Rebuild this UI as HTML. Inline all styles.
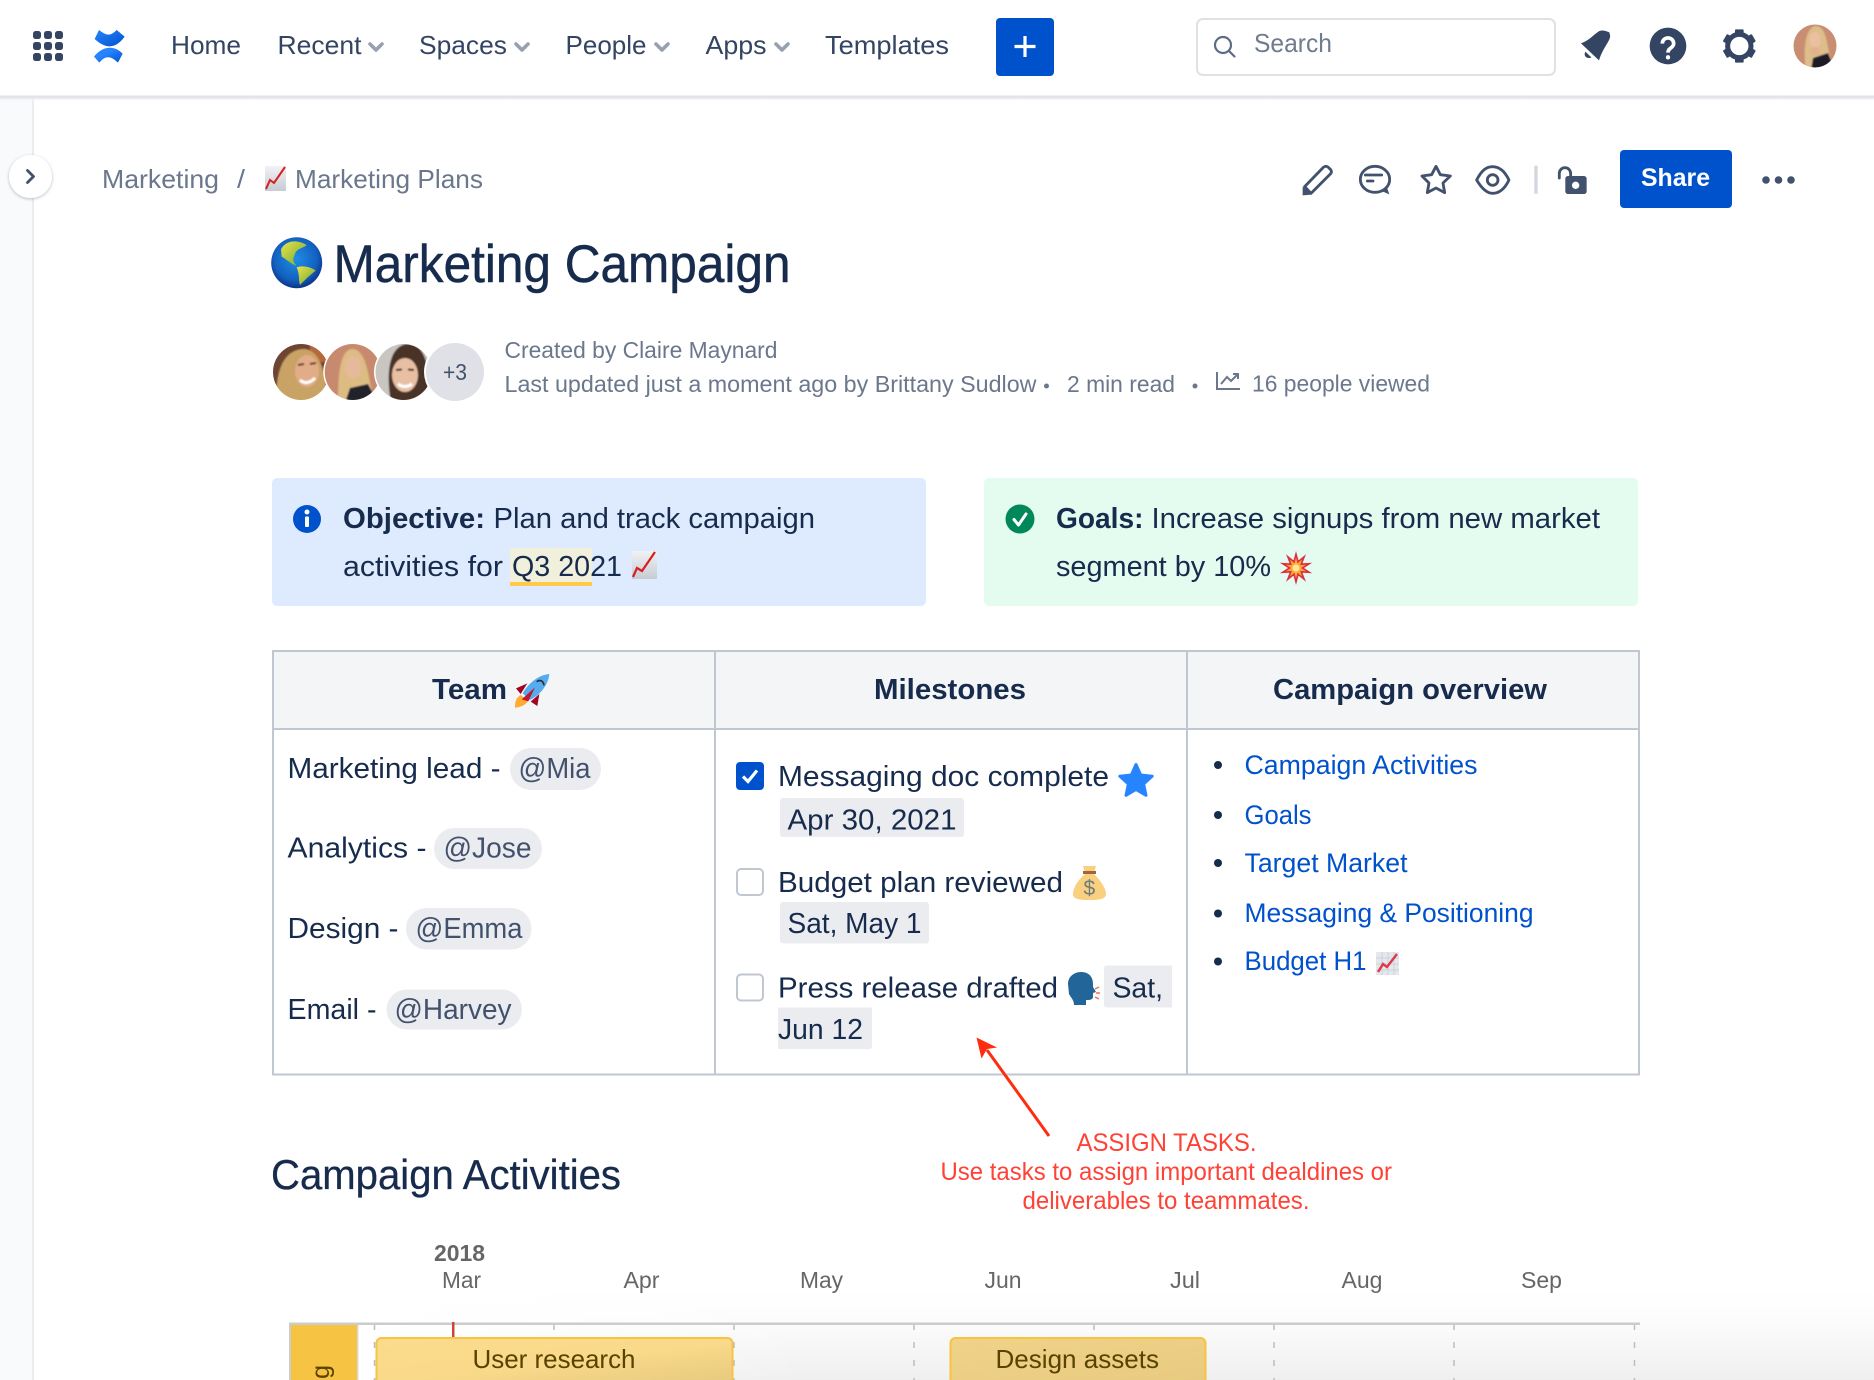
<!DOCTYPE html>
<html lang="en">
<head>
<meta charset="utf-8">
<title>Marketing Campaign</title>
<style>
html,body{margin:0;padding:0;background:#fff;width:1874px;height:1380px;overflow:hidden}
svg{display:block}
text{font-family:"Liberation Sans",Arial,sans-serif}
.nav{font-size:26px;fill:#344563}
.crumb{font-size:26px;fill:#6B778C}
.meta{font-size:23px;fill:#6B778C}
.body{font-size:29px;fill:#172B4D}
.bold{font-size:29px;fill:#172B4D;font-weight:700}
.ment{font-size:29px;fill:#42526E}
.link{font-size:26.5px;fill:#0052CC}
.note{font-size:25px;fill:#FF4136}
.axis{font-size:23px;fill:#666}
.bar{font-size:26px;fill:#594300}
.pill{fill:#EBECF0}
.ic{fill:none;stroke:#42526E;stroke-width:8.5;stroke-linecap:round;stroke-linejoin:round}
.chev{fill:none;stroke:#97A0AF;stroke-width:3.6;stroke-linecap:round;stroke-linejoin:round}
</style>
</head>
<body>
<svg width="1874" height="1380" viewBox="0 0 1874 1380" xmlns="http://www.w3.org/2000/svg">
<defs>
<linearGradient id="logo" x1="0" y1="0" x2="1" y2="1"><stop offset="0" stop-color="#2684FF"/><stop offset="1" stop-color="#0052CC"/></linearGradient>
<linearGradient id="logo2" x1="1" y1="1" x2="0" y2="0"><stop offset="0" stop-color="#0052CC"/><stop offset=".6" stop-color="#2684FF"/></linearGradient>
<linearGradient id="navsh" x1="0" y1="0" x2="0" y2="1"><stop offset="0" stop-color="#DFE1E6"/><stop offset=".4" stop-color="#E4E6EA"/><stop offset="1" stop-color="#fff" stop-opacity="0"/></linearGradient>
<linearGradient id="box" x1="0" y1="0" x2="0" y2="1"><stop offset="0" stop-color="#F1F2F4"/><stop offset="1" stop-color="#C6CCD4"/></linearGradient>
<radialGradient id="sea" cx=".48" cy=".42" r=".6"><stop offset="0" stop-color="#1E8FE6"/><stop offset=".7" stop-color="#1360C0"/><stop offset="1" stop-color="#0A2E80"/></radialGradient>
<linearGradient id="land" x1="0" y1="0" x2="1" y2="1"><stop offset="0" stop-color="#E8E44E"/><stop offset="1" stop-color="#6EA52E"/></linearGradient>
<linearGradient id="fade" x1="0" y1="0" x2="0" y2="1"><stop offset="0" stop-color="#fff"/><stop offset=".35" stop-color="#FCFCFC"/><stop offset="1" stop-color="#EFEFEF"/></linearGradient>
<linearGradient id="fadeX" x1="0" y1="0" x2="1" y2="0"><stop offset="0" stop-color="#fff"/><stop offset="1" stop-color="#fff" stop-opacity="0"/></linearGradient>
<linearGradient id="barA" x1="0" y1="0" x2="1" y2="1"><stop offset="0" stop-color="#FBDC8C"/><stop offset=".55" stop-color="#F9D98A"/><stop offset="1" stop-color="#E8CB80"/></linearGradient>
<linearGradient id="barB" x1="0" y1="0" x2="1" y2="1"><stop offset="0" stop-color="#F0D388"/><stop offset="1" stop-color="#E8CB80"/></linearGradient>
<filter id="sh" x="-30%" y="-30%" width="160%" height="160%"><feDropShadow dx="0" dy="1" stdDeviation="1.5" flood-color="#091E42" flood-opacity=".28"/></filter>
<filter id="soft" x="-5%" y="-5%" width="110%" height="110%"><feGaussianBlur stdDeviation=".9"/></filter>
<clipPath id="c1"><circle cx="301" cy="372" r="28"/></clipPath>
<clipPath id="c2"><circle cx="352.7" cy="372" r="28"/></clipPath>
<clipPath id="c3"><circle cx="403.5" cy="372" r="28"/></clipPath>
<clipPath id="c4"><circle cx="1815" cy="46" r="21.5"/></clipPath>
</defs>

<!-- sidebar -->
<rect x="0" y="97" width="32" height="1283" fill="#F9FAFC"/>
<rect x="32" y="97" width="2" height="1283" fill="#EBECF0"/>

<!-- nav -->
<rect x="0" y="95.500" width="1874" height="6" fill="url(#navsh)"/>
<g fill="#344563">
<rect x="33" y="31" width="8" height="8" rx="2.600"/><rect x="44" y="31" width="8" height="8" rx="2.600"/><rect x="55" y="31" width="8" height="8" rx="2.600"/>
<rect x="33" y="42" width="8" height="8" rx="2.600"/><rect x="44" y="42" width="8" height="8" rx="2.600"/><rect x="55" y="42" width="8" height="8" rx="2.600"/>
<rect x="33" y="53" width="8" height="8" rx="2.600"/><rect x="44" y="53" width="8" height="8" rx="2.600"/><rect x="55" y="53" width="8" height="8" rx="2.600"/>
</g>
<g transform="translate(20,15) scale(.3333)">
<path d="M237 45C255 58 268 68 290 45L314 65C285 105 255 100 224 72Z" fill="url(#logo)"/>
<path d="M222 125C250 90 285 92 308 116L294 143C275 125 258 118 238 143Z" fill="url(#logo2)"/>
</g>
<text class="nav" x="171" y="54" textLength="70" lengthAdjust="spacingAndGlyphs">Home</text>
<text class="nav" x="277.500" y="54" textLength="84" lengthAdjust="spacingAndGlyphs">Recent</text>
<path class="chev" d="M370 44l6 6 6-6"/>
<text class="nav" x="419" y="54" textLength="88" lengthAdjust="spacingAndGlyphs">Spaces</text>
<path class="chev" d="M516 44l6 6 6-6"/>
<text class="nav" x="565.500" y="54" textLength="81" lengthAdjust="spacingAndGlyphs">People</text>
<path class="chev" d="M656 44l6 6 6-6"/>
<text class="nav" x="705.500" y="54" textLength="61" lengthAdjust="spacingAndGlyphs">Apps</text>
<path class="chev" d="M776 44l6 6 6-6"/>
<text class="nav" x="825" y="54" textLength="124" lengthAdjust="spacingAndGlyphs">Templates</text>
<rect x="996" y="18" width="58" height="58" rx="4" fill="#0052CC"/>
<path d="M1025 36v21M1014.500 46.500h21" stroke="#fff" stroke-width="3.200" fill="none"/>

<rect x="1197" y="19" width="358" height="56" rx="6" fill="#fff" stroke="#DFE1E6" stroke-width="2"/>
<circle cx="1223" cy="45" r="8" fill="none" stroke="#5E6C84" stroke-width="2.200"/>
<path d="M1229 51l5.500 5.500" stroke="#5E6C84" stroke-width="2.200" stroke-linecap="round"/>
<text x="1254" y="52" font-size="26" fill="#707B8C" textLength="78" lengthAdjust="spacingAndGlyphs">Search</text>

<g transform="translate(1570,15) scale(.3333)" fill="#344563">
<path d="M33 85C60 75 75 55 88 48C100 44 112 50 118 52L120 60C124 75 100 95 87 136Z"/>
<path d="M46 110L64 127C55 133 38 126 46 110Z"/>
<circle cx="294" cy="93" r="55"/>
<path d="M277 86C277 63 311 63 311 86C311 100 294 97 294 113" fill="none" stroke="#fff" stroke-width="11"/>
<circle cx="294" cy="127" r="6.500" fill="#fff"/>
<circle cx="508" cy="93" r="35" fill="none" stroke="#344563" stroke-width="15"/>
<rect x="495" y="43" width="26" height="16" rx="3"/>
<rect x="495" y="127" width="26" height="16" rx="3"/>
<rect x="495" y="43" width="26" height="16" rx="3" transform="rotate(60 508 93)"/>
<rect x="495" y="43" width="26" height="16" rx="3" transform="rotate(120 508 93)"/>
<rect x="495" y="43" width="26" height="16" rx="3" transform="rotate(240 508 93)"/>
<rect x="495" y="43" width="26" height="16" rx="3" transform="rotate(300 508 93)"/>
</g>

<!-- nav avatar -->
<g clip-path="url(#c4)">
<g filter="url(#soft)">
<rect x="1792" y="23" width="46" height="46" fill="#C98E72"/>
<path d="M1806 70C1803 50 1805 27 1816 26C1828 27 1826 48 1832 62L1826 70Z" fill="#DDBE8A"/>
<ellipse cx="1815" cy="40" rx="5.500" ry="8" fill="#EBC0A2"/>
<path d="M1812 47h6l2 8-9 0Z" fill="#E3B090"/>
<path d="M1811 70L1813 58L1828 53L1835 70Z" fill="#1E1E28"/>
</g>
</g>

<!-- collapse -->
<circle cx="30.500" cy="176.500" r="21.500" fill="#fff" filter="url(#sh)"/>
<path d="M27.500 170.500l6 6-6 6" fill="none" stroke="#42526E" stroke-width="2.800" stroke-linecap="round" stroke-linejoin="round"/>

<!-- breadcrumb -->
<text class="crumb" x="102" y="188" textLength="117" lengthAdjust="spacingAndGlyphs">Marketing</text>
<text class="crumb" x="237" y="188" textLength="8" lengthAdjust="spacingAndGlyphs">/</text>
<g transform="translate(265,166)">
<rect width="21" height="25" fill="url(#box)"/>
<path d="M1 23L5 14L9 17L20 1" fill="none" stroke="#D81E1E" stroke-width="2"/>
</g>
<text class="crumb" x="295" y="188" textLength="188" lengthAdjust="spacingAndGlyphs">Marketing Plans</text>

<!-- action icons -->
<g transform="translate(1290,150) scale(.3333)">
<path class="ic" d="M44 110L100 52Q108 46 115 52L122 59Q127 66 121 72L63 130Z"/>
<path d="M38 110L38 136L64 134Z" fill="#42526E"/>
<ellipse class="ic" cx="255" cy="88" rx="44" ry="39"/>
<path d="M272 122L298 133L290 110Z" fill="#42526E"/>
<path class="ic" d="M226 75H275M232 93H249"/>
<path class="ic" d="M438 49L451 74L481 78L459 99L464 128L438 114L412 128L417 99L396 78L425 74Z"/>
<path class="ic" d="M560 90C575 60 590 50 608 50C630 50 645 65 657 90C645 115 630 130 608 130C590 130 575 115 560 90Z"/>
<circle class="ic" cx="608" cy="90" r="16"/>
<rect x="733" y="47" width="10" height="84" fill="#D3D7DF"/>
<path class="ic" d="M808 84V70A17 17 0 0 1 842 70V80"/>
<rect x="826" y="78" width="64" height="54" rx="8" fill="#42526E"/>
<circle cx="857" cy="106" r="11" fill="#fff"/>
</g>
<rect x="1620" y="150" width="112" height="58" rx="4" fill="#0052CC"/>
<text x="1641" y="186" font-size="25" font-weight="700" fill="#fff" textLength="69" lengthAdjust="spacingAndGlyphs">Share</text>
<g fill="#42526E"><circle cx="1766" cy="180" r="3.800"/><circle cx="1778.500" cy="180" r="3.800"/><circle cx="1791" cy="180" r="3.800"/></g>

<!-- globe + title -->
<circle cx="296.700" cy="262.700" r="25.500" fill="url(#sea)"/>
<g transform="translate(265,230) scale(.3333)" fill="url(#land)">
<path d="M48 58C60 35 90 25 125 45C115 55 95 55 90 72C85 85 80 90 95 108C75 100 60 85 50 80Z"/>
<path d="M95 112C115 105 140 112 152 122C135 135 120 150 105 165C100 150 105 135 95 112Z"/>
</g>
<text x="333.500" y="282" font-size="53" fill="#172B4D" stroke="#172B4D" stroke-width=".5" textLength="457" lengthAdjust="spacingAndGlyphs">Marketing Campaign</text>

<!-- avatars -->
<g clip-path="url(#c1)">
<g filter="url(#soft)">
<rect x="271" y="342" width="62" height="60" fill="#6E4430"/>
<rect x="310" y="342" width="23" height="20" fill="#B5673A"/>
<path d="M276 403C276 372 282 350 304 349C320 350 324 372 326 385L322 403Z" fill="#C9A265"/>
<ellipse cx="307" cy="371" rx="12" ry="16" fill="#E2AC88"/>
<path d="M300 380Q307 386 315 378" stroke="#fff" stroke-width="3" fill="none"/>
<path d="M298 365l6-1M310 364l6-1" stroke="#5A3A28" stroke-width="2"/>
</g>
</g>
<circle cx="352.700" cy="372" r="29.500" fill="#fff"/>
<g clip-path="url(#c2)">
<g filter="url(#soft)">
<rect x="323" y="342" width="60" height="60" fill="#C88A6E"/>
<path d="M338 403C338 375 340 350 352 349C366 349 368 375 372 392L366 403Z" fill="#DDBC84"/>
<ellipse cx="353" cy="367" rx="8" ry="11" fill="#E7B99B"/>
<path d="M345 403L350 388L368 384L378 403Z" fill="#20202C"/>
</g>
</g>
<circle cx="403.500" cy="372" r="29.500" fill="#fff"/>
<g clip-path="url(#c3)">
<g filter="url(#soft)">
<rect x="374" y="342" width="60" height="60" fill="#C9C5C1"/>
<path d="M391 403C386 375 388 345 408 344C426 344 430 370 428 392L420 403Z" fill="#4A3225"/>
<ellipse cx="405" cy="375" rx="13" ry="17" fill="#E9BFA3"/>
<path d="M398 384Q405 389 412 384" stroke="#fff" stroke-width="3" fill="none"/>
<path d="M396 370l6-.5M408 369.500l6 .5" stroke="#3A2A20" stroke-width="2"/>
</g>
</g>
<circle cx="455" cy="372" r="31" fill="#fff"/>
<circle cx="455" cy="372" r="29" fill="#DFE1E6"/>
<text x="443" y="380" font-size="23" fill="#42526E" textLength="24" lengthAdjust="spacingAndGlyphs">+3</text>

<text class="meta" x="504.500" y="358" textLength="273" lengthAdjust="spacingAndGlyphs">Created by Claire Maynard</text>
<text class="meta" x="504.500" y="392" textLength="532" lengthAdjust="spacingAndGlyphs">Last updated just a moment ago by Brittany Sudlow</text>
<circle cx="1046.500" cy="386" r="2.500" fill="#6B778C"/>
<text class="meta" x="1067" y="392" textLength="108" lengthAdjust="spacingAndGlyphs">2 min read</text>
<circle cx="1195" cy="386" r="2.500" fill="#6B778C"/>
<path d="M1217 372V389H1240M1221 384L1227 377L1231 381L1238 374M1233 374H1238V379" fill="none" stroke="#6B778C" stroke-width="2"/>
<text class="meta" x="1252" y="391.500" textLength="178" lengthAdjust="spacingAndGlyphs">16 people viewed</text>

<!-- panels -->
<rect x="272" y="478" width="654" height="128" rx="5" fill="#DEEBFF"/>
<rect x="984" y="478" width="654" height="128" rx="5" fill="#E3FCEF"/>
<circle cx="307" cy="519" r="14" fill="#0052CC"/>
<circle cx="307" cy="512" r="2.500" fill="#fff"/>
<rect x="305" y="516.500" width="4" height="10.500" rx="1" fill="#fff"/>
<text class="bold" x="343" y="528" textLength="142" lengthAdjust="spacingAndGlyphs">Objective:</text>
<text class="body" x="493.500" y="528" textLength="321.500" lengthAdjust="spacingAndGlyphs">Plan and track campaign</text>
<text class="body" x="343" y="576" textLength="160" lengthAdjust="spacingAndGlyphs">activities for</text>
<rect x="510" y="548" width="82" height="34" fill="#F1F0DC"/>
<rect x="510" y="582" width="82" height="4" fill="#FFC94A"/>
<text class="body" x="512" y="576" textLength="110" lengthAdjust="spacingAndGlyphs">Q3 2021</text>
<g transform="translate(632,551)">
<rect width="25" height="28" fill="url(#box)"/>
<path d="M1 26L5 17L10 20L23 1" fill="none" stroke="#D81E1E" stroke-width="2.200"/>
</g>

<circle cx="1020" cy="519" r="14.500" fill="#00875A"/>
<path d="M1014 519.500l4.500 5.500 7.500-11" fill="none" stroke="#fff" stroke-width="3" stroke-linecap="round" stroke-linejoin="round"/>
<text class="bold" x="1056" y="528" textLength="87.500" lengthAdjust="spacingAndGlyphs">Goals:</text>
<text class="body" x="1151.500" y="528" textLength="448.500" lengthAdjust="spacingAndGlyphs">Increase signups from new market</text>
<text class="body" x="1056" y="576" textLength="215" lengthAdjust="spacingAndGlyphs">segment by 10%</text>
<g transform="translate(1296,568)">
<polygon fill="#DD2E44" points="0,-17 2.500,-7.600 10,-13.800 6.500,-4.700 16.200,-5.300 8,0 16.200,5.300 6.500,4.700 10,13.800 2.500,7.600 0,17 -2.500,7.600 -10,13.800 -6.500,4.700 -16.200,5.300 -8,0 -16.200,-5.300 -6.500,-4.700 -10,-13.800 -2.500,-7.600"/>
<polygon fill="#FFAC33" transform="scale(.62)" points="0,-17 2.500,-7.600 10,-13.800 6.500,-4.700 16.200,-5.300 8,0 16.200,5.300 6.500,4.700 10,13.800 2.500,7.600 0,17 -2.500,7.600 -10,13.800 -6.500,4.700 -16.200,5.300 -8,0 -16.200,-5.300 -6.500,-4.700 -10,-13.800 -2.500,-7.600"/>
<circle r="3.500" fill="#FFE8A0"/>
</g>

<!-- table -->
<rect x="273" y="651" width="1366" height="78" fill="#F4F5F7"/>
<g fill="none" stroke="#C1C7D0" stroke-width="2">
<rect x="273" y="651" width="1366" height="423.500"/>
<path d="M273 729H1639M715 651V1074.500M1187 651V1074.500"/>
</g>
<text class="bold" x="432" y="699" textLength="75" lengthAdjust="spacingAndGlyphs">Team</text>
<g transform="translate(500,540) scale(.3333)">
<path d="M82 430L48 445L62 462Z" fill="#A0041E"/>
<path d="M118 462L112 498L92 485Z" fill="#A0041E"/>
<path d="M62 465C45 475 45 490 45 503C60 503 78 495 85 482Z" fill="#FFAC33"/>
<path d="M148 402C115 405 85 430 68 460L90 480C120 465 145 435 148 402Z" fill="#55ACEE"/>
<path d="M65 478L105 442L85 484Z" fill="#BE1931"/>
<path d="M110 425C120 418 130 422 132 436" fill="none" stroke="#292F33" stroke-width="5"/>
</g>
<text class="bold" x="874" y="699" textLength="152" lengthAdjust="spacingAndGlyphs">Milestones</text>
<text class="bold" x="1273" y="699" textLength="274" lengthAdjust="spacingAndGlyphs">Campaign overview</text>

<!-- team col -->
<text class="body" x="287.500" y="778" textLength="213" lengthAdjust="spacingAndGlyphs">Marketing lead -</text>
<rect class="pill" x="510" y="748" width="91" height="42" rx="21"/>
<text class="ment" x="518.500" y="778" textLength="72" lengthAdjust="spacingAndGlyphs">@Mia</text>
<text class="body" x="287.500" y="857.500" textLength="139" lengthAdjust="spacingAndGlyphs">Analytics -</text>
<rect class="pill" x="434" y="828" width="108" height="41" rx="20.500"/>
<text class="ment" x="443.500" y="857.500" textLength="88" lengthAdjust="spacingAndGlyphs">@Jose</text>
<text class="body" x="287.500" y="938" textLength="111" lengthAdjust="spacingAndGlyphs">Design -</text>
<rect class="pill" x="406" y="908" width="125.500" height="41.500" rx="20.500"/>
<text class="ment" x="415.500" y="938" textLength="107" lengthAdjust="spacingAndGlyphs">@Emma</text>
<text class="body" x="287.500" y="1019" textLength="89" lengthAdjust="spacingAndGlyphs">Email -</text>
<rect class="pill" x="386.500" y="989.500" width="135.500" height="40" rx="20"/>
<text class="ment" x="394.500" y="1019" textLength="117" lengthAdjust="spacingAndGlyphs">@Harvey</text>

<!-- milestones col -->
<rect x="736" y="762" width="28" height="28" rx="4" fill="#0052CC"/>
<path d="M743 776.500l5 5 9-11" fill="none" stroke="#fff" stroke-width="3.200"/>
<text class="body" x="778" y="786" textLength="331" lengthAdjust="spacingAndGlyphs">Messaging doc complete</text>
<path d="M1136 764.500L1140.700 775L1152.200 776.200L1143.600 784L1146 795.300L1136 789.500L1126 795.300L1128.400 784L1119.800 776.200L1131.300 775Z" fill="#2684FF" stroke="#2684FF" stroke-width="3" stroke-linejoin="round"/>
<rect class="pill" x="780" y="798" width="184" height="39" rx="3"/>
<text class="body" x="787.500" y="829.500" textLength="169" lengthAdjust="spacingAndGlyphs">Apr 30, 2021</text>

<rect x="737" y="869" width="26" height="26" rx="4" fill="#fff" stroke="#C1C7D0" stroke-width="2"/>
<text class="body" x="778" y="892" textLength="285" lengthAdjust="spacingAndGlyphs">Budget plan reviewed</text>
<g transform="translate(1073,866)">
<path d="M12 8C5 14 0 22 0 28C0 33 6 34 16 34C27 34 33 33 33 28C33 22 27 14 21 8Z" fill="#F8D07E"/>
<path d="M10 0H23L21 7H12Z" fill="#F8D07E"/>
<rect x="10" y="5" width="13" height="3" fill="#A0653A"/>
<text x="10.500" y="29" font-size="21" fill="#6D7B82">$</text>
</g>
<rect class="pill" x="780" y="902" width="149" height="41.500" rx="3"/>
<text class="body" x="787.500" y="933" textLength="134" lengthAdjust="spacingAndGlyphs">Sat, May 1</text>

<rect x="737" y="974.500" width="26" height="26" rx="4" fill="#fff" stroke="#C1C7D0" stroke-width="2"/>
<text class="body" x="778" y="997.500" textLength="280" lengthAdjust="spacingAndGlyphs">Press release drafted</text>
<g transform="translate(1067,972)">
<path d="M1 12C1 4 8 0 14 0C21 0 26 4 26 12L26 15L29 20L26 21V25C26 28 22 28 19 28V33H7C7 28 4 26 2 22Z" fill="#226699"/>
<path d="M28 17l4-2M29 21h4M28 25l4 2" stroke="#F4704A" stroke-width="1.500" fill="none"/>
</g>
<path class="pill" d="M1107 965.500H1172V1007.500H1107Q1104 1007.500 1104 1004.500V968.500Q1104 965.500 1107 965.500Z"/>
<text class="body" x="1112.500" y="997.500" textLength="50.500" lengthAdjust="spacingAndGlyphs">Sat,</text>
<path class="pill" d="M778 1007.500H872V1046Q872 1049 869 1049H778Z"/>
<text class="body" x="778" y="1039" textLength="85" lengthAdjust="spacingAndGlyphs">Jun 12</text>

<!-- overview col -->
<g fill="#172B4D">
<circle cx="1218" cy="765" r="4"/><circle cx="1218" cy="815" r="4"/><circle cx="1218" cy="863" r="4"/><circle cx="1218" cy="913.500" r="4"/><circle cx="1218" cy="961.500" r="4"/>
</g>
<text class="link" x="1244.500" y="774" textLength="233" lengthAdjust="spacingAndGlyphs">Campaign Activities</text>
<text class="link" x="1244.500" y="824" textLength="67" lengthAdjust="spacingAndGlyphs">Goals</text>
<text class="link" x="1244.500" y="872" textLength="163" lengthAdjust="spacingAndGlyphs">Target Market</text>
<text class="link" x="1244.500" y="922" textLength="289" lengthAdjust="spacingAndGlyphs">Messaging &amp; Positioning</text>
<text class="link" x="1244.500" y="970" textLength="122" lengthAdjust="spacingAndGlyphs">Budget H1</text>
<g transform="translate(1376,952)">
<rect width="23" height="23" fill="#E4E7EC"/>
<path d="M0 6H23M0 12H23M0 18H23M6 0V23M12 0V23M18 0V23" stroke="#CDD2DA" stroke-width="1"/>
<path d="M2 20L7 12L11 15L21 2" fill="none" stroke="#E0384A" stroke-width="2.400"/>
</g>

<!-- annotation -->
<path d="M987 1050L1049 1136" stroke="#FF2D10" stroke-width="3"/>
<polygon points="976.500,1037.500 997,1047.500 987,1049 981.500,1058.500" fill="#FF2D10"/>
<text class="note" x="1076.500" y="1151" textLength="180" lengthAdjust="spacingAndGlyphs">ASSIGN TASKS.</text>
<text class="note" x="940.500" y="1180" textLength="451.500" lengthAdjust="spacingAndGlyphs">Use tasks to assign important dealdines or</text>
<text class="note" x="1022.500" y="1209" textLength="287" lengthAdjust="spacingAndGlyphs">deliverables to teammates.</text>

<text x="271" y="1189" font-size="41.500" fill="#172B4D" stroke="#172B4D" stroke-width=".3" textLength="350" lengthAdjust="spacingAndGlyphs">Campaign Activities</text>

<!-- timeline -->
<rect x="357" y="1290" width="1517" height="90" fill="url(#fade)"/>
<rect x="357" y="1290" width="450" height="90" fill="url(#fadeX)"/>
<text class="axis" x="434" y="1261" font-weight="700" textLength="51" lengthAdjust="spacingAndGlyphs">2018</text>
<text class="axis" x="442" y="1288" textLength="39" lengthAdjust="spacingAndGlyphs">Mar</text>
<text class="axis" x="623.500" y="1288" textLength="36" lengthAdjust="spacingAndGlyphs">Apr</text>
<text class="axis" x="800" y="1288" textLength="43" lengthAdjust="spacingAndGlyphs">May</text>
<text class="axis" x="984.500" y="1288" textLength="37" lengthAdjust="spacingAndGlyphs">Jun</text>
<text class="axis" x="1170" y="1288" textLength="30" lengthAdjust="spacingAndGlyphs">Jul</text>
<text class="axis" x="1341.500" y="1288" textLength="41" lengthAdjust="spacingAndGlyphs">Aug</text>
<text class="axis" x="1521" y="1288" textLength="41" lengthAdjust="spacingAndGlyphs">Sep</text>
<g stroke="#BDBDBD" stroke-width="1.500" stroke-dasharray="6 12" fill="none">
<path d="M374.500 1324V1380M554 1324V1380M734 1324V1380M914 1324V1380M1094 1324V1380M1274 1324V1380M1454 1324V1380M1634.500 1324V1380"/>
</g>
<rect x="289" y="1322.500" width="1351" height="2.500" fill="#CCCCCC"/>
<rect x="289" y="1322.500" width="2" height="57.500" fill="#CCCCCC"/>
<rect x="291" y="1325" width="66" height="55" fill="#F6C342"/>
<rect x="357" y="1325" width="1.500" height="55" fill="#D9D9D9"/>
<text transform="translate(329,1365) rotate(-90)" text-anchor="end" font-size="25" fill="#594300">g</text>
<rect x="452" y="1322" width="2.500" height="16" fill="#D04437"/>
<path d="M376.500 1380V1343a5 5 0 0 1 5-5H727.500a5 5 0 0 1 5 5V1380" fill="url(#barA)" stroke="#F6C342" stroke-width="2"/>
<text class="bar" x="472.500" y="1368" textLength="163" lengthAdjust="spacingAndGlyphs">User research</text>
<path d="M950.500 1380V1343a5 5 0 0 1 5-5H1200.500a5 5 0 0 1 5 5V1380" fill="url(#barB)" stroke="#F6C342" stroke-width="2"/>
<text class="bar" x="995.500" y="1368" textLength="163.500" lengthAdjust="spacingAndGlyphs">Design assets</text>
</svg>
</body>
</html>
